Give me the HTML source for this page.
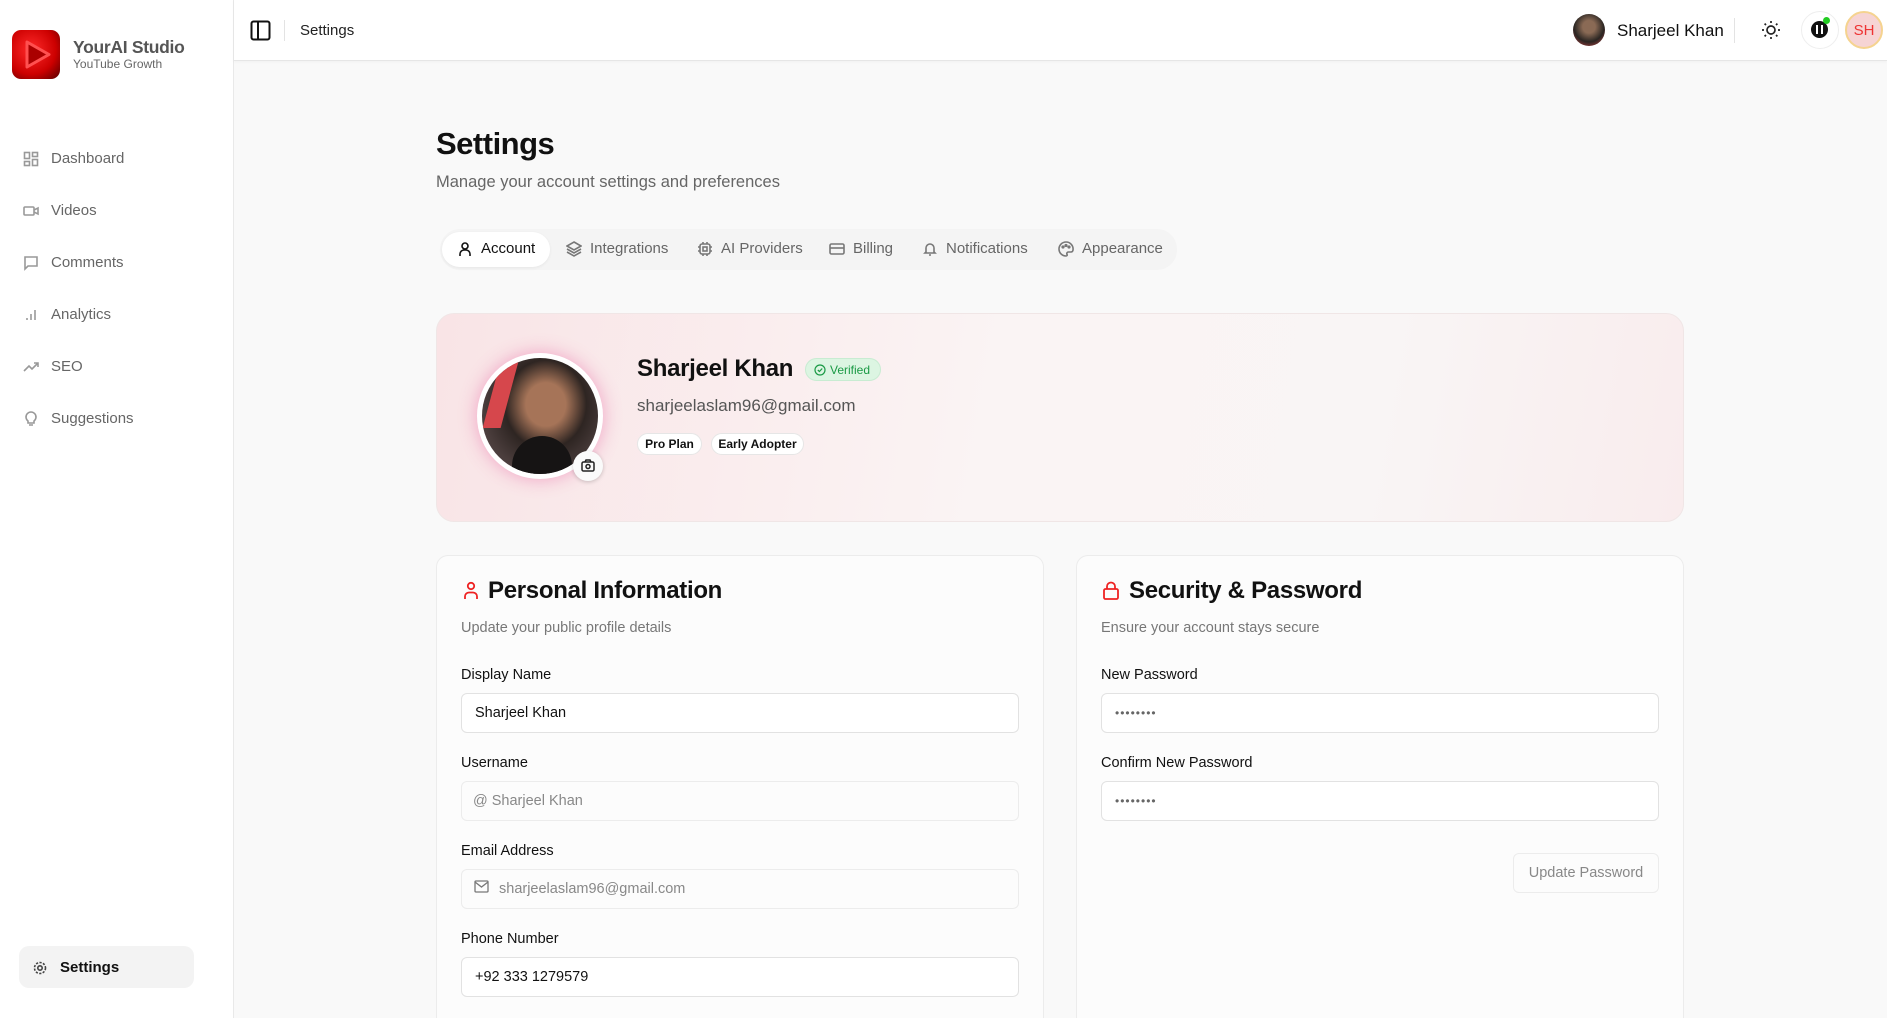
<!DOCTYPE html>
<html><head><meta charset="utf-8"><style>
*{box-sizing:border-box;margin:0;padding:0}
html,body{width:1887px;height:1018px;overflow:hidden}
body{background:#f9f9f9;font-family:"Liberation Sans",sans-serif;color:#111;position:relative}
.abs{position:absolute}
.sb{left:0;top:0;width:234px;height:1018px;background:#fff;border-right:1px solid #e9e9e9}
.hd{left:234px;top:0;right:0;height:61px;background:#fff;border-bottom:1px solid #e6e6e6;box-shadow:0 1px 3px rgba(0,0,0,.04)}
.nav{position:absolute;left:23px;font-size:15px;color:#666;display:flex;align-items:center;gap:12px}
.nav svg{width:16px;height:16px;stroke:#999;fill:none;stroke-width:1.6}
.tab{position:absolute;top:240px;font-size:15px;color:#666;display:flex;align-items:center;gap:8px}
.tab svg{width:16px;height:16px;stroke:#777;fill:none;stroke-width:1.6}
.card{background:#fcfcfc;border:1px solid #ececec;border-bottom:none;border-radius:12px 12px 0 0}
.lbl{position:absolute;font-size:14.5px;color:#111}
.inp{position:absolute;height:40px;border:1px solid #e2e2e2;border-radius:6px;background:#fff;font-size:14.5px;padding-left:13px;display:flex;align-items:center}
</style></head><body>
<div class="abs sb"></div>
<div class="abs" style="left:12px;top:30px;width:48px;height:49px;border-radius:9px;background:radial-gradient(circle at 40% 40%,#ff2a2a,#c00 60%,#500 100%)"><svg width="48" height="49" viewBox="0 0 48 49"><path d="M15 12 L37 24.5 L15 37 Z" fill="#a00" stroke="#ff5050" stroke-width="3" stroke-linejoin="round"/></svg></div>
<div class="abs" style="left:73px;top:37px;font-size:17.5px;font-weight:bold;color:#555;letter-spacing:-0.3px">YourAI Studio</div>
<div class="abs" style="left:73px;top:57px;font-size:12px;color:#666">YouTube Growth</div>
<div class="nav" style="top:150px"><svg viewBox="0 0 16 16"><rect x="1.5" y="1.5" width="5" height="6"/><rect x="9.5" y="1.5" width="5" height="4"/><rect x="1.5" y="10.5" width="5" height="4"/><rect x="9.5" y="8.5" width="5" height="6"/></svg>Dashboard</div>
<div class="nav" style="top:202px"><svg viewBox="0 0 16 16"><rect x="1" y="4" width="10" height="8" rx="1"/><path d="M11 7l4-2v6l-4-2"/></svg>Videos</div>
<div class="nav" style="top:254px"><svg viewBox="0 0 16 16"><path d="M2 2h12v9H5l-3 3z"/></svg>Comments</div>
<div class="nav" style="top:306px"><svg viewBox="0 0 16 16"><path d="M4 13v-2M8 13V7M12 13V3"/></svg>Analytics</div>
<div class="nav" style="top:358px"><svg viewBox="0 0 16 16"><path d="M1 12l5-5 3 3 6-6M11 4h4v4"/></svg>SEO</div>
<div class="nav" style="top:410px"><svg viewBox="0 0 16 16"><path d="M5 10a5 5 0 1 1 6 0v2H5zM6 14h4"/></svg>Suggestions</div>
<div class="abs" style="left:19px;top:946px;width:175px;height:42px;border-radius:10px;background:#f3f3f3"></div>
<div class="nav" style="top:959px;left:32px;color:#111;font-weight:bold"><svg viewBox="0 0 16 16" style="stroke:#444"><circle cx="8" cy="8" r="2.2"/><circle cx="8" cy="8" r="5.5" stroke-dasharray="2.2 1.4"/></svg>Settings</div>

<div class="abs hd"></div>
<svg class="abs" style="left:250px;top:20px" width="21" height="21" viewBox="0 0 21 21"><rect x="1.5" y="1.5" width="18" height="18" rx="2" fill="none" stroke="#111" stroke-width="2"/><path d="M8 2v17" stroke="#111" stroke-width="2"/></svg>
<div class="abs" style="left:284px;top:20px;width:1px;height:21px;background:#e3e3e3"></div>
<div class="abs" style="left:300px;top:22px;font-size:15px;color:#222">Settings</div>
<div class="abs" style="left:1573px;top:14px;width:32px;height:32px;border-radius:50%;background:radial-gradient(circle at 50% 40%,#8a6a55 25%,#2a2522 60%,#c44 100%)"></div>
<div class="abs" style="left:1617px;top:21px;font-size:17px;color:#111">Sharjeel Khan</div>
<div class="abs" style="left:1734px;top:18px;width:1px;height:25px;background:#e3e3e3"></div>
<svg class="abs" style="left:1760px;top:19px" width="22" height="22" viewBox="0 0 22 22" fill="none" stroke="#222" stroke-width="1.7"><circle cx="11" cy="11" r="4"/><path d="M11 2v2M11 18v2M2 11h2M18 11h2M4.6 4.6l1.4 1.4M16 16l1.4 1.4M4.6 17.4L6 16M16 6l1.4-1.4"/></svg>
<div class="abs" style="left:1801px;top:11px;width:38px;height:38px;border-radius:50%;background:#fff;border:1px solid #eee"></div>
<div class="abs" style="left:1811px;top:21px;width:17px;height:17px;border-radius:50%;background:#111"></div>
<div class="abs" style="left:1816px;top:25px;width:2px;height:9px;background:#fff"></div><div class="abs" style="left:1821px;top:25px;width:2px;height:9px;background:#fff"></div>
<div class="abs" style="left:1823px;top:17px;width:7px;height:7px;border-radius:50%;background:#2c2"></div>
<div class="abs" style="left:1845px;top:11px;width:38px;height:38px;border-radius:50%;background:#f6d4d4;border:2px solid #f5d38f;color:#e33;font-size:15px;display:flex;align-items:center;justify-content:center">SH</div>

<div class="abs" style="left:436px;top:126px;font-size:31px;font-weight:bold;letter-spacing:-0.5px">Settings</div>
<div class="abs" style="left:436px;top:173px;font-size:16.5px;color:#666">Manage your account settings and preferences</div>
<div class="abs" style="left:440px;top:229px;width:737px;height:41px;border-radius:20px;background:#f4f4f4"></div>
<div class="abs" style="left:442px;top:232px;width:108px;height:35px;border-radius:18px;background:#fff;box-shadow:0 1px 3px rgba(0,0,0,.06)"></div>
<div class="tab" style="left:457px;color:#111"><svg viewBox="0 0 16 16" style="stroke:#111"><circle cx="8" cy="5" r="3"/><path d="M3 15v-2a4 4 0 0 1 4-4h2a4 4 0 0 1 4 4v2"/></svg>Account</div>
<div class="tab" style="left:566px"><svg viewBox="0 0 16 16"><path d="M8 1l7 4-7 4-7-4zM1 8l7 4 7-4M1 11l7 4 7-4"/></svg>Integrations</div>
<div class="tab" style="left:697px"><svg viewBox="0 0 16 16"><rect x="3" y="3" width="10" height="10" rx="2"/><rect x="6" y="6" width="4" height="4"/><path d="M6 1v2M10 1v2M6 13v2M10 13v2M1 6h2M1 10h2M13 6h2M13 10h2"/></svg>AI Providers</div>
<div class="tab" style="left:829px"><svg viewBox="0 0 16 16"><rect x="1" y="3" width="14" height="10" rx="1.5"/><path d="M1 7h14"/></svg>Billing</div>
<div class="tab" style="left:922px"><svg viewBox="0 0 16 16"><path d="M4 11V7a4 4 0 0 1 8 0v4l1 1H3zM7 14h2"/></svg>Notifications</div>
<div class="tab" style="left:1058px"><svg viewBox="0 0 16 16"><path d="M8 1a7 7 0 0 0 0 14c1 0 1.5-.8 1-1.6-.6-1 .2-2.4 1.4-2.4H13a2 2 0 0 0 2-2A7 7 0 0 0 8 1z"/><circle cx="5" cy="6" r=".8"/><circle cx="8" cy="4.5" r=".8"/><circle cx="11" cy="6" r=".8"/></svg>Appearance</div>

<div class="abs" style="left:436px;top:313px;width:1248px;height:209px;border-radius:18px;background:linear-gradient(100deg,#f9e4e6 0%,#faf4f4 45%,#f9f5f5 75%,#f9eced 100%);border:1px solid #f0e6e6"></div>
<div class="abs" style="left:477px;top:353px;width:126px;height:126px;border-radius:50%;background:#fff;box-shadow:0 0 18px rgba(230,80,150,.45)"></div>
<div class="abs" style="left:482px;top:358px;width:116px;height:116px;border-radius:50%;background:radial-gradient(ellipse at 55% 40%,#a67458 0 22%,#2e2522 45%,#4a3d3c 70%,#5a4d4c 100%);overflow:hidden"><div style="position:absolute;left:10px;top:0;width:18px;height:70px;background:#d6474c;transform:skew(-15deg)"></div><div style="position:absolute;left:30px;top:78px;width:60px;height:40px;border-radius:30px 30px 0 0;background:#161414"></div></div>
<div class="abs" style="left:573px;top:451px;width:30px;height:30px;border-radius:50%;background:#fafafa;box-shadow:0 1px 4px rgba(0,0,0,.2)"><svg width="30" height="30" viewBox="0 0 30 30" fill="none" stroke="#222" stroke-width="1.5"><rect x="9" y="11" width="12" height="9" rx="1.5"/><path d="M12 11l1-2h4l1 2"/><circle cx="15" cy="15.5" r="2"/></svg></div>
<div class="abs" style="left:637px;top:355px;font-size:24px;font-weight:bold;letter-spacing:-0.3px">Sharjeel Khan</div>
<div class="abs" style="left:805px;top:358px;width:76px;height:23px;border-radius:12px;background:#dcf5e2;border:1px solid #c8ecd2;color:#1a9a45;font-size:12px;display:flex;align-items:center;padding-left:8px;gap:4px"><svg width="12" height="12" viewBox="0 0 12 12" fill="none" stroke="#1a9a45" stroke-width="1.2"><circle cx="6" cy="6" r="5"/><path d="M3.8 6l1.6 1.5 2.8-3"/></svg>Verified</div>
<div class="abs" style="left:637px;top:396px;font-size:17px;color:#555">sharjeelaslam96@gmail.com</div>
<div class="abs" style="left:637px;top:433px;width:65px;height:22px;border-radius:11px;background:#fff;border:1px solid #e6e6e6;font-size:12px;font-weight:bold;display:flex;align-items:center;justify-content:center">Pro Plan</div>
<div class="abs" style="left:711px;top:433px;width:93px;height:22px;border-radius:11px;background:#fff;border:1px solid #e6e6e6;font-size:12px;font-weight:bold;display:flex;align-items:center;justify-content:center">Early Adopter</div>

<div class="abs card" style="left:436px;top:555px;width:608px;height:463px"></div>
<svg class="abs" style="left:462px;top:581px" width="18" height="19" viewBox="0 0 18 19" fill="none" stroke="#e22" stroke-width="1.8"><circle cx="9" cy="5" r="3.2"/><path d="M3 18v-2.5a4 4 0 0 1 4-4h4a4 4 0 0 1 4 4V18"/></svg>
<div class="abs" style="left:488px;top:577px;font-size:24px;font-weight:bold;color:#111;letter-spacing:-0.3px">Personal Information</div>
<div class="abs" style="left:461px;top:620px;font-size:14.5px;color:#777">Update your public profile details</div>
<div class="lbl" style="left:461px;top:667px">Display Name</div>
<div class="inp" style="left:461px;top:693px;width:558px">Sharjeel Khan</div>
<div class="lbl" style="left:461px;top:755px">Username</div>
<div class="inp" style="left:461px;top:781px;width:558px;color:#888;border-color:#ececec;background:#fcfcfc;padding-left:11px">@ Sharjeel Khan</div>
<div class="lbl" style="left:461px;top:843px">Email Address</div>
<div class="inp" style="left:461px;top:869px;width:558px;color:#888;border-color:#ececec;background:#fcfcfc;padding-left:12px"><svg width="15" height="13" viewBox="0 0 15 13" fill="none" stroke="#777" stroke-width="1.3" style="margin-right:10px;margin-top:-6px"><rect x="1" y="1" width="13" height="11" rx="1"/><path d="M1 2l6.5 5L14 2"/></svg>sharjeelaslam96@gmail.com</div>
<div class="lbl" style="left:461px;top:931px">Phone Number</div>
<div class="inp" style="left:461px;top:957px;width:558px">+92 333 1279579</div>

<div class="abs card" style="left:1076px;top:555px;width:608px;height:463px"></div>
<svg class="abs" style="left:1102px;top:581px" width="18" height="19" viewBox="0 0 18 19" fill="none" stroke="#e22" stroke-width="1.8"><rect x="2" y="8" width="14" height="10" rx="1.5"/><path d="M5 8V5.5a4 4 0 0 1 8 0V8"/></svg>
<div class="abs" style="left:1129px;top:577px;font-size:24px;font-weight:bold;color:#111;letter-spacing:-0.3px">Security &amp; Password</div>
<div class="abs" style="left:1101px;top:620px;font-size:14.5px;color:#777">Ensure your account stays secure</div>
<div class="lbl" style="left:1101px;top:667px">New Password</div>
<div class="inp" style="left:1101px;top:693px;width:558px;color:#666;font-size:12px;letter-spacing:1px">••••••••</div>
<div class="lbl" style="left:1101px;top:755px">Confirm New Password</div>
<div class="inp" style="left:1101px;top:781px;width:558px;color:#666;font-size:12px;letter-spacing:1px">••••••••</div>
<div class="inp" style="left:1513px;top:853px;width:146px;color:#888;border-color:#ececec;background:#fcfcfc;padding:0;justify-content:center">Update Password</div>
</body></html>
